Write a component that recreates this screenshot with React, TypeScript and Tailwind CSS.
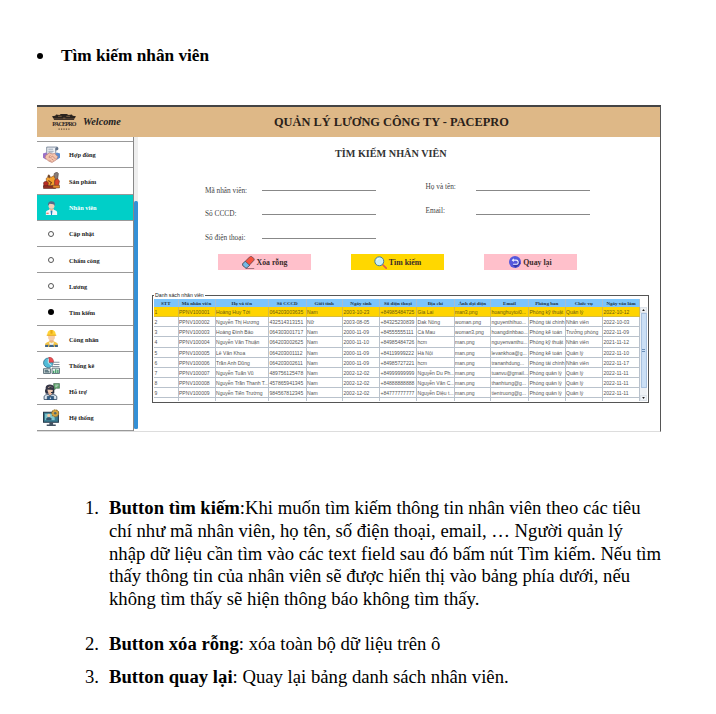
import type { ReactNode } from 'react';

const columns = [
  { label: 'STT', w: 'w-[24.5px]' },
  { label: 'Mã nhân viên', w: 'w-[37px]' },
  { label: 'Họ và tên', w: 'w-[53.5px]' },
  { label: 'Số CCCD', w: 'w-[37.5px]' },
  { label: 'Giới tính', w: 'w-[36.5px]' },
  { label: 'Ngày sinh', w: 'w-[37px]' },
  { label: 'Số điện thoại', w: 'w-[37px]' },
  { label: 'Địa chỉ', w: 'w-[37.5px]' },
  { label: 'Ảnh đại diện', w: 'w-[36.5px]' },
  { label: 'Email', w: 'w-[38px]' },
  { label: 'Phòng ban', w: 'w-[36.5px]' },
  { label: 'Chức vụ', w: 'w-[37.5px]' },
  { label: 'Ngày vào làm', w: 'w-[37px]' },
];

const rows = [
  ['1', 'PPNV100001', 'Hoàng Huy Tới', '064203003635', 'Nam', '2003-10-23', '+84985484725', 'Gia Lai', 'man3.png', 'hoanghuytoi0...', 'Phòng kỹ thuật', 'Quản lý', '2022-10-12'],
  ['2', 'PPNV100002', 'Nguyễn Thị Hương', '432514313151', 'Nữ', '2003-08-05', '+84325230839', 'Dak Nông', 'woman.png', 'nguyenthihuo...', 'Phòng tài chính', 'Nhân viên', '2022-10-03'],
  ['3', 'PPNV100003', 'Hoàng Đình Bảo', '064303001717', 'Nam', '2000-11-09', '+84555555111', 'Cà Mau', 'woman3.png', 'hoangdinhbao...', 'Phòng kế toán', 'Trưởng phòng', '2022-11-09'],
  ['4', 'PPNV100004', 'Nguyễn Văn Thuận', '064203002625', 'Nam', '2000-11-10', '+84985484726', 'hcm', 'man.png', 'nguyenvanthu...', 'Phòng kỹ thuật', 'Nhân viên', '2021-11-12'],
  ['5', 'PPNV100005', 'Lê Văn Khoa', '064203001112', 'Nam', '2000-11-09', '+84119999222', 'Hà Nội', 'man.png', 'levankhoa@g...', 'Phòng kế toán', 'Quản lý', '2022-11-10'],
  ['6', 'PPNV100006', 'Trần Anh Dũng', '064203002611', 'Nam', '2000-11-09', '+84985727221', 'hcm', 'man.png', 'trananhdung...', 'Phòng tài chính', 'Nhân viên', '2022-11-17'],
  ['7', 'PPNV100007', 'Nguyễn Tuấn Vũ', '489756125478', 'Nam', '2002-12-02', '+84999999999', 'Nguyễn Du Ph...', 'man.png', 'tuanvu@gmail...', 'Phòng quản lý', 'Quản lý', '2022-11-11'],
  ['8', 'PPNV100008', 'Nguyễn Trần Thanh T...', '457865941345', 'Nam', '2002-12-02', '+84888888888', 'Nguyễn Văn C...', 'man.png', 'thanhtung@g...', 'Phòng quản lý', 'Quản lý', '2022-11-11'],
  ['9', 'PPNV100009', 'Nguyễn Tiến Trường', '984567812345', 'Nam', '2002-12-02', '+84777777777', 'Nguyễn Diệu t...', 'man.png', 'tientruong@g...', 'Phòng quản lý', 'Quản lý', '2022-11-11'],
];

const Svg = ({ children, size = 'size-[17px]' }: { children: ReactNode; size?: string }) => (
  <svg viewBox="0 0 32 32" className={`${size} shrink-0`} fill="none">{children}</svg>
);

const ContractIcon = () => (
  <Svg>
    <path d="M7 2h20v5h-3v13H7z" fill="#eef1f5" stroke="#65758a" strokeWidth="1.5" />
    <path d="M26 2c4 0 4 6 0 6h-3V4z" fill="#64748b" />
    <path d="M10 6h9M10 10h10M10 13h8" stroke="#8b98a9" strokeWidth="1.5" />
    <path d="M0 14l6-2 5 5-5 9-6-4z" fill="#9a71c8" />
    <path d="M32 14l-6-2-5 5 5 9 6-4z" fill="#5b8dd0" />
    <path d="M5 18l7-5 5 2 5-1 6 6-3 6-8 5-7-3-6-6z" fill="#f4c5ae" stroke="#b6786c" strokeWidth="1.2" />
    <path d="M14 17l-3 4 3 1 4-3 6 6M12 26l3 3M16 24l4 3" stroke="#b6786c" strokeWidth="1.3" />
  </Svg>
);
const ProductIcon = () => (
  <Svg>
    <path d="M21 3l5-3 3 3-2 14-6-2z" fill="#877b78" stroke="#463832" />
    <path d="M6 12l5-4 4 2 5-3 3 5-2 14H7z" fill="#f3a12e" stroke="#6d3b1f" />
    <path d="M8 8l3-4 3 4-2 4z" fill="#71452a" />
    <path d="M1 20c2-3 7-3 9 0l-1 8H2z" fill="#b72c23" stroke="#571c18" />
    <path d="M0 26h19l5 5H1z" fill="#963124" stroke="#4c211a" />
    <path d="M22 16l5-4 4 5-2 10h-7z" fill="#d9442e" stroke="#66251c" />
    <path d="M18 25h13v5H19z" fill="#e88c32" stroke="#60341a" />
    <path d="M10 16l6 4-3 4" stroke="#764017" strokeWidth="2" />
  </Svg>
);
const StaffIcon = () => (
  <Svg size="size-[15px]">
    <path d="M11 18h10v6H11z" fill="#e8b899" />
    <path d="M4 32v-6c0-3 3-4 8-6l4 4 4-4c5 2 8 3 8 6v6z" fill="#f3f7fa" />
    <path d="M14 23h4l-1 9h-2z" fill="#287fba" />
    <circle cx="16" cy="12" r="6.5" fill="#f4d2ba" />
    <path d="M9 12C6 1 22 0 23 7v6l-3-4-8-1z" fill="#536a87" />
    <path d="M5 27h5v3H5z" fill="#e78373" />
  </Svg>
);
const WorkerIcon = () => (
  <Svg>
    <path d="M12 18h8v6h-8z" fill="#eab18a" />
    <path d="M4 32v-5c0-3 5-5 9-6l3 3 3-3c4 1 9 3 9 6v5z" fill="#f4c446" />
    <path d="M12 22l4 3 4-3v8h-8z" fill="#f0f3f5" />
    <path d="M4 28h24v4H4z" fill="#40658b" />
    <circle cx="16" cy="13" r="6.5" fill="#f6cda8" />
    <path d="M8 10C8 3 11 0 16 0s8 3 8 10z" fill="#ffd236" />
    <path d="M14 0h4v7h-4zM7 9h18v2H7z" fill="#e7a817" />
    <path d="M12 27l-2 5M20 27l2 5" stroke="#f4c446" strokeWidth="2" />
  </Svg>
);
const StatsIcon = () => (
  <Svg>
    <circle cx="10" cy="11" r="9" fill="#51bcd8" stroke="#366b87" strokeWidth="1.5" />
    <path d="M11 0a10 10 0 019 10h-9z" fill="#ee4e50" stroke="#9b3944" />
    <path d="M10 11V3M10 11l6 5" stroke="#f4f7f8" strokeWidth="1.5" />
    <path d="M20 10h11M20 14h11M16 18h15" stroke="#84929d" strokeWidth="2" />
    <path d="M1 22h13v9H1zM17 21h14v10H17z" fill="#e7f0ed" stroke="#415863" strokeWidth="1.5" />
    <path d="M3 25h7M3 28h9" stroke="#385764" strokeWidth="2" />
    <path d="M20 30v-4M24 30v-7M28 30v-6" stroke="#3e9b64" strokeWidth="2.5" />
  </Svg>
);
const SupportIcon = () => (
  <Svg>
    <path d="M20 1h11v9h-6l-4 3v-3h-1z" fill="#60a56a" stroke="#345745" />
    <path d="M23 4h6M23 7h4" stroke="#eef" strokeWidth="1.2" />
    <path d="M5 20V9C5 1 21 1 21 9v11" fill="#353646" />
    <path d="M10 16h7v7h-7z" fill="#eab69a" />
    <ellipse cx="13.5" cy="12.5" rx="5" ry="6" fill="#f1cbb1" />
    <path d="M7 12V9c5 0 7-2 8-3 1 3 5 3 5 3v4" fill="#353646" />
    <path d="M2 31v-5c0-3 4-4 8-5l3 4 4-4c4 1 9 2 9 5v5z" fill="#dde8f2" stroke="#263e58" strokeWidth="1.5" />
    <path d="M8 25h12v7H8z" fill="#315e89" stroke="#243c53" />
    <circle cx="14" cy="28.5" r="1.3" fill="white" />
    <path d="M5 12v5h3M20 13v5h-5" stroke="#252c3c" strokeWidth="2" />
  </Svg>
);
const SystemIcon = () => (
  <Svg>
    <path d="M1 6h28v19H1z" fill="#397b91" stroke="#263a4b" strokeWidth="2" />
    <path d="M4 9h18v12H4z" fill="#7fc7cd" />
    <circle cx="11" cy="12" r="3" fill="#f4c9a7" />
    <path d="M6 21v-3c2-3 8-3 10 0v3z" fill="#34546d" />
    <path d="M12 25h7v4h5v3H7v-3h5z" fill="#435161" />
    <circle cx="23" cy="8" r="6.5" fill="#d6a33d" stroke="#8d7438" strokeWidth="2" strokeDasharray="3 1.5" />
    <circle cx="23" cy="8" r="2.4" fill="#506a70" />
  </Svg>
);
const EraserIcon = () => (
  <Svg size="size-[13px]">
    <path d="M3 18L19 2c2-2 4-2 6 0l4 4c2 2 1 4 0 5L13 28c-2 2-4 2-6 0l-4-4c-2-2-2-4 0-6z" fill="#f5523e" stroke="#374151" strokeWidth="1.6" />
    <path d="M3 18l5-5 11 10-6 5c-2 2-4 2-6 0l-4-4c-2-2-2-4 0-6z" fill="#75b8e4" stroke="#374151" strokeWidth="1.6" />
    <path d="M10 31h20" stroke="#5b3540" strokeWidth="1.5" />
  </Svg>
);
const SearchIcon = () => (
  <Svg size="size-[13px]">
    <path d="M21 21l9 9" stroke="#e35b48" strokeWidth="4" strokeLinecap="round" />
    <circle cx="13" cy="13" r="11" fill="#c9eff7" stroke="#447a94" strokeWidth="2.4" />
    <path d="M7 11c1-4 4-5 6-5" stroke="white" strokeWidth="2" />
  </Svg>
);
const BackIcon = () => (
  <Svg size="size-[12px]">
    <circle cx="16" cy="16" r="16" fill="#5558dc" />
    <path d="M18 31l13-11-6-10-6 13-9 1z" fill="#3436a7" />
    <path d="M10 11h9a5.5 5.5 0 010 11h-8" stroke="#eef" strokeWidth="3" />
    <path d="M13 6l-6 5 6 5z" fill="#eef" />
  </Svg>
);

const menu: { label: string; icon?: ReactNode; dot?: 'open' | 'full'; active?: boolean }[] = [
  { label: 'Hợp đồng', icon: <ContractIcon /> },
  { label: 'Sản phẩm', icon: <ProductIcon /> },
  { label: 'Nhân viên', icon: <StaffIcon />, active: true },
  { label: 'Cập nhật', dot: 'open' },
  { label: 'Chấm công', dot: 'open' },
  { label: 'Lương', dot: 'open' },
  { label: 'Tìm kiếm', dot: 'full' },
  { label: 'Công nhân', icon: <WorkerIcon /> },
  { label: 'Thống kê', icon: <StatsIcon /> },
  { label: 'Hỗ trợ', icon: <SupportIcon /> },
  { label: 'Hệ thống', icon: <SystemIcon /> },
];

const Sidebar = () => (
  <div className="flex h-[295px] w-[101px] shrink-0">
    <div className="h-[294px] w-[97px] border-r border-[#888] pt-[4px]">
      <div className="border-b border-[#999]">
        {menu.map((m) => (
          <div
            key={m.label}
            className={`flex h-[26.3px] items-center border-t border-[#999] ${m.active ? 'bg-[#00cfc8] text-white' : 'text-[#222]'}`}
          >
            <div className="flex w-[28px] shrink-0 justify-center">
              {m.icon}
              {m.dot === 'open' && <span className="size-[6px] rounded-full border border-[#555]" />}
              {m.dot === 'full' && <span className="size-[6px] rounded-full bg-black" />}
            </div>
            <span className="pt-px pl-[4px] text-[6.3px] font-bold whitespace-nowrap">{m.label}</span>
          </div>
        ))}
      </div>
    </div>
    <div className="h-[292px] w-[4px] bg-[#eeeeee] pt-[64px]">
      <div className="h-[228px] rounded-[1.5px] bg-[#3490d6]" />
    </div>
  </div>
);

const Field = ({ label, labelW, shift }: { label: string; labelW: string; shift: string }) => (
  <div className="flex h-[14px] items-start text-[7.3px] leading-[10px] text-[#444]">
    <span className={`${labelW} ${shift} whitespace-nowrap`}>{label}</span>
    <span className="h-[11px] w-[114px] border-b border-[#888]" />
  </div>
);

const Btn = ({ icon, label, color }: { icon: ReactNode; label: string; color: string }) => (
  <div className={`flex h-[16px] w-[93px] items-center justify-center gap-[2px] text-[7.8px] font-bold text-[#3a2a2a] ${color}`}>
    {icon}
    <span className="pt-px whitespace-nowrap">{label}</span>
  </div>
);

const Table = () => (
  <fieldset className="relative mt-[25px] ml-[14px] h-[108px] w-[497px] border-[1.5px] border-[#555] pt-[3px] pl-[1px]">
    <span className="absolute top-[-5px] left-[1px] bg-white px-px text-[5.2px] leading-[8px] whitespace-nowrap text-[#222] [font-family:'Liberation_Sans',sans-serif]">
      Danh sách nhân viên
    </span>
    <div className="flex">
      <div className="h-[103px] w-[486px] shrink-0 overflow-hidden">
        <div className="flex h-[8px] bg-[#7cc4fb]">
          {columns.map((c) => (
            <div key={c.label} className={`${c.w} shrink-0 border-r border-[#a3bfd6] text-center text-[5px] leading-[9px] font-bold whitespace-nowrap text-[#234]`}>
              {c.label}
            </div>
          ))}
        </div>
        {rows.map((r, i) => (
          <div key={r[0]} className={`flex h-[10.13px] [font-family:'Liberation_Sans',sans-serif] ${i === 0 ? 'bg-[#ffd400] text-[#6b5a10]' : 'text-[#555]'}`}>
            {r.map((v, j) => (
              <div
                key={j}
                className={`${columns[j].w} shrink-0 overflow-hidden border-r border-b pl-[0.5px] text-[5.05px] leading-[10px] whitespace-nowrap ${i === 0 ? 'border-[#d8bd3c]' : 'border-[#b9c2cc]'}`}
              >
                {v}
              </div>
            ))}
          </div>
        ))}
        <div className="flex h-[3px]">
          {columns.map((c) => (
            <div key={c.label} className={`${c.w} shrink-0 border-r border-[#b9c2cc]`} />
          ))}
        </div>
      </div>
      <div className="mt-[8px] flex h-[94px] w-[7px] flex-col items-center bg-[#eef1f5]">
        <div className="flex h-[6px] w-full items-center justify-center border border-[#dde3ea]">
          <svg viewBox="0 0 4 3" className="h-[2px] w-[3px]"><path d="M0 3L2 0l2 3z" fill="#222" /></svg>
        </div>
        <div className="flex h-[75px] w-[6px] flex-col items-center justify-center gap-px border border-[#a9c2e0] bg-[#cbdff5]">
          <span className="h-px w-[3px] bg-[#6c8fb8]" />
          <span className="h-px w-[3px] bg-[#6c8fb8]" />
        </div>
        <div className="mt-auto flex h-[6px] w-full items-center justify-center border border-[#dde3ea]">
          <svg viewBox="0 0 4 3" className="h-[2px] w-[3px]"><path d="M0 0L2 3l2-3z" fill="#222" /></svg>
        </div>
      </div>
    </div>
  </fieldset>
);

const Logo = () => (
  <div className="flex w-[26px] flex-col items-center">
    <svg viewBox="0 0 52 13" className="h-[6px] w-[26px]">
      <path d="M0 5l7-1 2-3 7 1 3-2h13l4 2 7-1 2 3 7 1-3 5H3z" fill="#2b241f" />
      <path d="M4 9h44v4H4z" fill="#43352a" />
      <path d="M13 5h8M31 5h8M24 9h5" stroke="#a07c54" strokeWidth="1.5" />
    </svg>
    <span className="text-[6px] leading-[8px] font-bold tracking-[-0.75px] whitespace-nowrap text-[#2b241f]">PACEPRO</span>
    <svg viewBox="0 0 24 4" className="h-[2px] w-[12px]">
      <path d="M1 2h22" stroke="#6a5139" strokeWidth="2.5" strokeDasharray="2.5 2.4" />
    </svg>
  </div>
);

export default function App() {
  return (
    <div className="h-[714px] w-[716px] overflow-hidden bg-white text-black [font-family:'Liberation_Serif',serif]">
      <div className="flex h-[105px] items-start pt-[44px] pl-[37px]">
        <span className="mt-[9px] size-[6px] rounded-full bg-black" />
        <h1 className="ml-[18px] text-[17.25px] leading-[24px] font-bold whitespace-nowrap">Tìm kiếm nhân viên</h1>
      </div>

      <div className="ml-[37px] h-[327px] w-[624px] border-t-2 border-r border-b border-t-[#444] border-r-[#555] border-b-[#ddd]">
        <header className="flex h-[30px] items-center bg-[#deb887]">
          <div className="flex w-[237px] items-center pl-[14px]">
            <Logo />
            <span className="ml-[6px] text-[10.2px] font-bold text-[#222] italic">Welcome</span>
          </div>
          <span className="text-[12.36px] font-bold whitespace-nowrap text-[#2a2119]">QUẢN LÝ LƯƠNG CÔNG TY - PACEPRO</span>
        </header>
        <div className="flex h-[294px]">
          <Sidebar />
          <main className="min-w-0 flex-1">
            <h2 className="pt-[11px] pl-[197px] text-[10.2px] leading-[12px] font-bold whitespace-nowrap text-[#333]">TÌM KIẾM NHÂN VIÊN</h2>
            <div className="flex h-[94px] pt-[20px] pl-[67px]">
              <div className="flex w-[220.5px] flex-col gap-[10.2px]">
                <Field label="Mã nhân viên:" labelW="w-[57px]" shift="pt-[6px]" />
                <Field label="Số CCCD:" labelW="w-[57px]" shift="pt-[5px]" />
                <Field label="Số điện thoại:" labelW="w-[57px]" shift="pt-[5px]" />
              </div>
              <div className="flex flex-col gap-[10.2px]">
                <Field label="Họ và tên:" labelW="w-[50.5px]" shift="pt-[2px]" />
                <Field label="Email:" labelW="w-[50.5px]" shift="pt-[2px]" />
              </div>
            </div>
            <div className="flex gap-[40px] pl-[80px]">
              <Btn icon={<EraserIcon />} label="Xóa rỗng" color="bg-[#ffc0cb]" />
              <Btn icon={<SearchIcon />} label="Tìm kiếm" color="bg-[#ffd700]" />
              <Btn icon={<BackIcon />} label="Quay lại" color="bg-[#ffc0cb]" />
            </div>
            <Table />
          </main>
        </div>
      </div>

      <ol className="mt-[65px] ml-[85px] text-[18.7px] leading-[22.8px] whitespace-nowrap">
        <li className="flex">
          <span className="w-[24px]">1.</span>
          <div>
            <p><b>Button tìm kiếm</b>:Khi muốn tìm kiếm thông tin nhân viên theo các tiêu</p>
            <p>chí như mã nhân viên, họ tên, số điện thoại, email, … Người quản lý</p>
            <p>nhập dữ liệu cần tìm vào các text field sau đó bấm nút Tìm kiếm. Nếu tìm</p>
            <p>thấy thông tin của nhân viên sẽ được hiển thị vào bảng phía dưới, nếu</p>
            <p>không tìm thấy sẽ hiện thông báo không tìm thấy.</p>
          </div>
        </li>
        <li className="mt-[22px] flex">
          <span className="w-[24px]">2.</span>
          <p><b>Button xóa rỗng</b>: xóa toàn bộ dữ liệu trên ô</p>
        </li>
        <li className="mt-[10px] flex">
          <span className="w-[24px]">3.</span>
          <p><b>Button quay lại</b>: Quay lại bảng danh sách nhân viên.</p>
        </li>
      </ol>
    </div>
  );
}
